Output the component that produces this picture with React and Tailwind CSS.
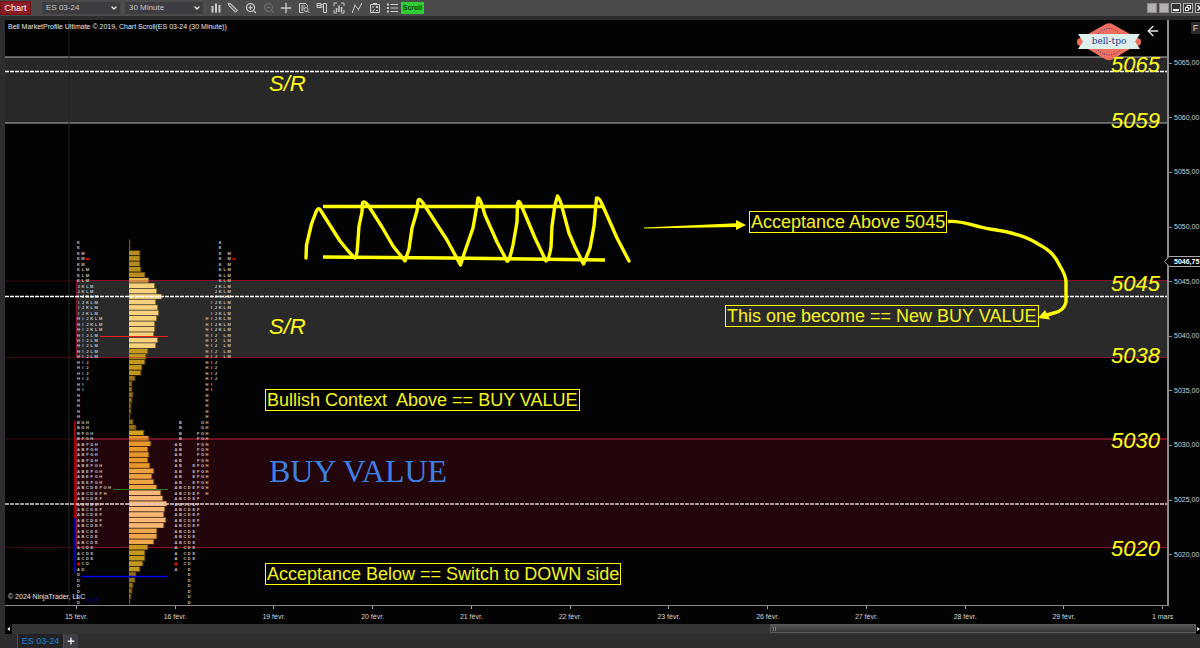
import {
  ArrowLeft,
  ChevronDown,
  ClipboardList,
  FileSearch,
  List,
  Plus,
  ZoomIn,
  ZoomOut,
} from 'lucide-react';

// One entry per half point: letters printed, volume bar width
const profile = [
  ['K', 1], ['K', 1], ['KM', 11], ['KM', 11], ['KM', 11], ['KLM', 12], ['KLM', 16],
  ['KLM', 20], ['JKLM', 26], ['JKLM', 28], ['IJKLM', 33], ['IJKLM', 27], ['IJKLM', 29],
  ['IJKLM', 30], ['HIJKLM', 28], ['HIJKLM', 26], ['HIJKLM', 26], ['HIJLM', 25], ['HIJLM', 29],
  ['HIJLM', 27], ['HIJLM', 19], ['HIJLM', 17], ['HIJ', 16], ['HIJ', 13], ['HIJ', 12],
  ['HIJ', 6], ['HI', 3], ['HI', 3], ['H', 4], ['H', 3], ['H', 2], ['H', 2], ['H', 1],
  ['BGH', 4], ['BGH', 7], ['BFGH', 15], ['BFGH', 20], ['ABFGH', 22], ['ABFGH', 19],
  ['ABFGH', 20], ['ABFGH', 19], ['ABEFGH', 21], ['ABEFGH', 25], ['ABEFGH', 23],
  ['ABEFGH', 25], ['ABCDEFGH', 28], ['ABCDEFH', 32], ['ABCDEF', 34], ['ABCDEF', 38],
  ['ABCDEF', 36], ['ABCDEF', 35], ['ABCDEF', 37], ['ABCDEF', 35], ['ABCDE', 28],
  ['ABCDE', 28], ['ABCDE', 25], ['ACDE', 19], ['ACDE', 16], ['ACDE', 16], ['ACD', 14],
  ['AD', 11], ['D', 7], ['D', 6], ['D', 4], ['D', 3], ['D', 2], ['D', 1],
];

const ROW = 5.45;
const TOP = 242.4;

const barColor = (i) => {
  if (i < 7) return '#b98c1e';
  if (i === 7) return '#e3b24f';
  if (i < 20) return '#f8d17c';
  if (i < 25) return '#c4981f';
  if (i < 35) return '#92701a';
  if (i === 35) return '#d4a11f';
  if (i < 42) return '#e8982a';
  if (i < 46) return '#eda341';
  if (i < 53) return '#fab877';
  if (i < 56) return '#eda84c';
  if (i < 61) return '#c4981f';
  return '#92701a';
};

const prices = ['5065,00', '5060,00', '5055,00', '5050,00', '5045,00', '5040,00', '5035,00', '5030,00', '5025,00', '5020,00'];
const days = ['15 févr.', '16 févr.', '19 févr.', '20 févr.', '21 févr.', '22 févr.', '23 févr.', '26 févr.', '27 févr.', '28 févr.', '29 févr.', '1 mars'];

const levels = [
  { text: '5065', top: 'top-[34px]' },
  { text: '5059', top: 'top-[90px]' },
  { text: '5045', top: 'top-[253px]' },
  { text: '5038', top: 'top-[325px]' },
  { text: '5030', top: 'top-[410px]' },
  { text: '5020', top: 'top-[518px]' },
];

const notes = [
  { text: 'Acceptance Above 5045', place: 'left-[744px] top-[191px]' },
  { text: 'This one become == New BUY VALUE', place: 'left-[720px] top-[285px]' },
  { text: 'Bullish Context  Above == BUY VALUE', place: 'left-[260px] top-[369px]' },
  { text: 'Acceptance Below == Switch to DOWN side', place: 'left-[260px] top-[543px]' },
];

function PickList({ label, value }) {
  return (
    <div className="relative w-[78px] h-3 bg-[#3d3d41]">
      <select
        aria-label={label}
        defaultValue={value}
        className="block w-full h-full appearance-none bg-transparent pl-1 text-[8px] leading-3 text-[#c4c4c4] outline-none"
      >
        <option>{value}</option>
      </select>
      <ChevronDown className="absolute right-0.5 top-0.5 size-2 text-gray-200 pointer-events-none" strokeWidth={4} />
    </div>
  );
}

function ToolIcon({ children }) {
  return (
    <svg viewBox="0 0 12 12" className="size-3" fill="none" stroke="currentColor" strokeWidth="1">
      {children}
    </svg>
  );
}

const tools = [
  {
    name: 'Chart style',
    icon: <ToolIcon><path d="M2.500 4v6.500M6 1.500v9M9.500 3v7.500" strokeWidth="2" /></ToolIcon>,
  },
  {
    name: 'Draw',
    icon: (
      <ToolIcon>
        <path d="M1 1l3 .8 6.500 6.500-2 2L2 3.800z" fill="currentColor" fillOpacity=".55" />
        <path d="M3 3l6 6" stroke="#4b4b4b" strokeWidth=".6" />
      </ToolIcon>
    ),
  },
  { name: 'Zoom in', icon: <ZoomIn className="size-3" strokeWidth={2.5} /> },
  { name: 'Zoom out', icon: <ZoomOut className="size-3 text-[#737373]" /> },
  { name: 'Cursor', icon: <Plus className="size-4" strokeWidth={2} /> },
  {
    name: 'Data box',
    icon: <ToolIcon><path d="M9.500 5V3.500L7.500 1.500h-6v9h4M3 4h4M3 6h3M3 8h2" /><circle cx="8" cy="7.500" r="2" /><path d="M9.500 9l2 2" /></ToolIcon>,
  },
  {
    name: 'Chart trader',
    icon: <ToolIcon><path d="M1 1.500h4v4H1zM1 3.500h4M7.500 1.500h3v9h-3zM5 2.500h2.500M5 5h2.500" /></ToolIcon>,
  },
  {
    name: 'Data series',
    icon: <ToolIcon><path d="M1 4V1h3M8 1h3v3M11 8v3H8M4 11H1V8" /><path d="M3.500 6v4M6 3.500V10M8.500 5v5" strokeWidth="1.500" /></ToolIcon>,
  },
  {
    name: 'Indicators',
    icon: <ToolIcon><path d="M1.500 10L4 3.500l3.500 4L10.500 2" /><path d="M1 10h1M3.500 3.500h1M7 7.500h1M10 2h1" strokeWidth="2" /></ToolIcon>,
  },
  {
    name: 'Strategies',
    icon: <ToolIcon><path d="M1.500 2.500h9v8h-9zM4 1.500h4M3 5h2M7 4l2 2M9 4L7 6M3 8.500l1 1 1.500-2M7 8.500h2" /></ToolIcon>,
  },
  {
    name: 'Properties',
    icon: <ToolIcon><path d="M4.500 2.500H12M4.500 6H12M4.500 9.500H12" /><path d="M1 2.500h2M1 6h2M1 9.500h2" strokeWidth="2" /></ToolIcon>,
  },
];

function Toolbar() {
  return (
    <header className="flex items-center h-4 shrink-0 overflow-hidden bg-[#4b4b4b] text-[#c9c9c9]">
      <button className="w-[31px] h-[14px] bg-[#8e1a23] border border-[#6d1119] text-[9px] leading-3 text-white">
        Chart
      </button>
      <div className="flex gap-[5px] ml-[11px]">
        <PickList label="Instrument" value="ES 03-24" />
        <PickList label="Interval" value="30 Minute" />
      </div>
      <div className="grid grid-cols-11 w-[194px] ml-1 h-4">
        {tools.map((tool) => (
          <button key={tool.name} aria-label={tool.name} className="flex items-center justify-center">
            {tool.icon}
          </button>
        ))}
      </div>
      <button className="w-[23px] h-3 bg-[#2fce35] text-[7px] leading-3 font-bold text-[#0b3a0d]">Scroll</button>
      <div className="flex gap-0.5 ml-auto -mr-[5px] shrink-0">
        <span className="size-[10px] bg-[#b4b0b0] border border-[#8d8a8a]" />
        <span className="size-[10px] bg-[#b4b0b0] border border-[#8d8a8a]" />
        <button aria-label="Minimize" className="flex items-end justify-center size-[10px] border border-[#b0b0b0] bg-[#333] pb-px">
          <span className="w-1.5 h-0.5 bg-white" />
        </button>
        <button aria-label="Restore" className="size-[10px] border border-[#b0b0b0] bg-[#333]">
          <svg viewBox="0 0 8 8" className="size-2" fill="none" stroke="#fff">
            <path d="M3 3V1.500h3.500V5H5M1.500 3.500h3v3h-3z" />
          </svg>
        </button>
        <button aria-label="Close" className="size-[10px] border border-[#b0b0b0] bg-[#333]">
          <svg viewBox="0 0 8 8" className="size-2" stroke="#fff" strokeWidth="1.500">
            <path d="M1.500 1.500l5 5M6.500 1.500l-5 5" />
          </svg>
        </button>
      </div>
    </header>
  );
}

function Letters({ x, collapsed }) {
  return profile.map(([letters], i) =>
    letters.split('').map((letter, n) => {
      const col = collapsed ? n : letter.charCodeAt(0) - 65;
      const stop = letter === 'A' && i === 59;
      const cx = x + col * 4.43;
      const cy = TOP + i * ROW;
      return stop ? (
        <circle key={letter + i} cx={cx} cy={cy} r="1.7" fill="#e00808" />
      ) : (
        <text key={letter + i} x={cx} y={cy + 1.5}>{letter}</text>
      );
    })
  );
}

function Drawing() {
  return (
    <svg className="absolute inset-0 w-full h-full" fill="none">
      <g transform="translate(-5 -20)">
        {/* Zones */}
        <rect x="5" y="57" width="100%" height="66" fill="#282828" />
        <path d="M5 57h4000M5 123h4000" stroke="#b5b5b5" />
        <rect x="76" y="281" width="100%" height="76" fill="#2a2a2a" />
        <path d="M76.500 357.500V280.500H4000M76.500 357.500H4000" stroke="#8c1029" />
        <rect x="76" y="439" width="100%" height="109" fill="#22060c" />
        <path d="M76.500 439V547.500H4000" stroke="#8c1029" />
        <path d="M5 281h71M5 357.500h71M5 439h71M5 547.500h71" stroke="#3c0913" />
        <path d="M76 439H4000" stroke="#6e1222" strokeWidth="2" />
        <path d="M69 20v586" stroke="#242424" />

        {/* Volume profile */}
        {profile.map(([, width], i) => (
          <g key={i}>
            <rect x="129" y={TOP + i * ROW - 2.7} width={width} height="4.7" fill={barColor(i)} />
            <rect x={128.3 + width} y={TOP + i * ROW - 2.7} width="1" height="5.2" fill="#5e4712" />
          </g>
        ))}
        <path d="M129 281h20M129 357.500h18M129 439h20" stroke="#b03a26" strokeOpacity=".7" />

        {/* TPO letters */}
        <g fill="#c4c4c4" fontSize="4" fontWeight="bold" textAnchor="middle" fontFamily="Liberation Sans, sans-serif">
          <Letters x={78.5} collapsed />
          <Letters x={176} />
        </g>
        <path d="M86 259h3M232.500 259h3" stroke="#d00" strokeWidth="2" />

        <path d="M5 71.500h4000M5 296.500h4000" stroke="#fff" strokeWidth="1.500" strokeDasharray="4 1" />
        <path d="M5 504h4000" stroke="#ddd0d0" strokeWidth="1.500" strokeDasharray="4 1" />
        <path d="M100 336.500h68" stroke="#f01c1c" />
        <path d="M113 489.500h55" stroke="#2d7a1a" />
        <path d="M82 576.500h86" stroke="#0000f0" strokeWidth="1.500" />
        <path d="M75 421v97" stroke="#e00000" strokeWidth="1.500" />
        <path d="M75 518v55" stroke="#0000e0" strokeWidth="1.500" />

        {/* Freehand notes */}
        <g stroke="#ffff00" strokeWidth="3.400" strokeLinecap="round" strokeLinejoin="round">
          <path d="M306 258L306.500 245L311.500 224L316 212Q318.500 206 321 211L326 219L340 241L349 252L355 258Q357 256 357.500 247L359 226L362 212L362.500 203Q364 200 368 205L382 227L393 246L405 261L409 249L412 228L417 211L418 201Q419 197 423 203L447 240L460.500 265L464 254L473 228L477 205L478 198Q480 197 485 215L497 242L507 261Q509 263 513 245L517 222L517.500 204Q518.500 198 522 207L535 238L546 261Q549 260 551 247L552 226L555 205L557.500 196Q560 199 562 207L569 233L575 247L583.500 264L590 248L594 226L596.500 198Q599 197 602 204L617 238L629 261" />
          <path d="M323 206.500H602M323 257L448 258L605 260" strokeLinecap="butt" />
          <path d="M948 221.500C962 220 972 226 990 229C1012 232 1026 236 1038 244C1052 251 1056 258 1060 266Q1066 276 1066 282V302Q1064 311 1054 313L1047 315" strokeLinecap="butt" />
        </g>
        <path d="M644 227.500L736 223.300V220L746 225L736 230V227L644 228.500z" fill="#ffff00" />
        <path d="M1038 318L1045 310L1050 319.500z" fill="#ffff00" />
      </g>
    </svg>
  );
}

function Logo() {
  return (
    <div className="absolute right-1.5 top-[3px] flex items-start gap-1 text-gray-200">
      <div className="relative w-16 h-[38px]">
        <svg viewBox="0 0 64 38" className="w-16 h-[38px]">
          <path d="M28 1.500Q32-1 36 1.500L53 11V26L36 36Q32 38.500 28 36L11 26V11z" fill="#ef6f5f" />
          <circle cx="4" cy="19" r="4" fill="#ef6f5f" />
          <circle cx="60" cy="19" r="4" fill="#ef6f5f" />
          <path d="M21 11Q32 0 43 11M21 27Q32 37 43 27" fill="none" stroke="#34347e" strokeWidth="1" strokeDasharray="1 1.400" />
          <path d="M1 11H63L58 18.500L63 26H1L6 18.500z" fill="#dcefea" />
        </svg>
        <span className="absolute inset-x-0 top-[12px] text-center font-['DejaVu_Serif',serif] text-[9px] leading-3 text-[#2d3a8c]">
          bell-tpo
        </span>
      </div>
      <button aria-label="Back">
        <ArrowLeft className="size-4" strokeWidth={2} />
      </button>
    </div>
  );
}

function Plot() {
  return (
    <main className="relative flex-1 overflow-hidden border-r-2 border-b border-[#8a8a8a] bg-[#030303]">
      <Drawing />
      <p className="absolute left-[3px] top-[3px] text-[7px] leading-2 text-gray-200">
        Bell MarketProfile Ultimate © 2019, Chart Scroll(ES 03-24 (30 Minute))
      </p>
      <Logo />
      <div className="text-[22px] leading-none italic text-[#ffff1a]">
        {levels.map((level) => (
          <span key={level.text} className={`absolute right-[7px] ${level.top}`}>{level.text}</span>
        ))}
        <span className="absolute left-[264px] top-[53px]">S/R</span>
        <span className="absolute left-[264px] top-[296px]">S/R</span>
      </div>
      {notes.map((note) => (
        <p
          key={note.text}
          className={`absolute border border-[#ffff00] px-px text-[18px] leading-5 whitespace-pre text-[#f4f41c] ${note.place}`}
        >
          {note.text}
        </p>
      ))}
      <h1 className="absolute left-[264px] top-[433px] font-['Liberation_Serif',serif] text-[32px] leading-9 whitespace-nowrap text-[#3f80e6]">
        BUY VALUE
      </h1>
      <p className="absolute left-[3px] bottom-1 text-[7px] leading-2 text-gray-200">© 2024 NinjaTrader, LLC</p>
      <span className="absolute left-[81px] bottom-px text-[5px] leading-2 text-[#00008c]">02/15</span>
    </main>
  );
}

function PriceAxis() {
  return (
    <aside className="relative flex flex-col w-[31px] shrink-0 pt-4 pb-6 text-[7px] leading-2 text-[#cfcfcf]">
      {prices.map((price) => (
        <div key={price} className="flex flex-1 items-center gap-0.5">
          <span className="w-[3px] h-px shrink-0 bg-[#8a8a8a]" />
          {price}
        </div>
      ))}
      <button className="absolute right-0 top-0.5 w-[9px] h-3 bg-[#2b2b2d] text-[9px] leading-3 text-gray-300">F</button>
      <div className="absolute -left-[5px] right-0 top-[236px] h-[11px]">
        <svg viewBox="0 0 36 11" className="absolute inset-0 w-full h-full">
          <path d="M38 .500H5L.500 5.500L5 10.500H38" fill="#030303" stroke="#a8a8a8" />
        </svg>
        <span className="absolute left-[10px] top-0.5 font-bold text-white">5046,75</span>
      </div>
    </aside>
  );
}

export default function App() {
  return (
    <div className="flex flex-col h-screen overflow-hidden bg-[#2d2d30] font-['Liberation_Sans',Arial,sans-serif]">
      <Toolbar />
      <div className="flex flex-col flex-1 min-h-0 mt-1 ml-[5px] overflow-hidden bg-[#030303]">
        <div className="flex flex-1 min-h-0">
          <Plot />
          <PriceAxis />
        </div>
        <div className="grid grid-cols-12 h-[18px] ml-[22px] -mr-[12px] shrink-0 text-[7px] leading-2 text-[#d5d5d5]">
          {days.map((day) => (
            <div key={day} className="flex flex-col items-center gap-1">
              <span className="w-px h-[3px] shrink-0 bg-[#a0a0a0]" />
              {day}
            </div>
          ))}
        </div>
      </div>
      <div className="flex h-[10px] shrink-0 ml-[5px] bg-[#343434]">
        <button aria-label="Scroll left" className="flex items-center justify-center w-[7px] bg-black">
          <svg viewBox="0 0 4 6" className="w-[3px] h-1"><path d="M4 0v6L0 3z" fill="#fff" /></svg>
        </button>
        <div className="flex flex-1 justify-end">
          <div className="flex items-center gap-px w-[36%] h-[9px] pl-0.5 border border-[#5a5a5a] bg-linear-to-b from-[#565656] to-[#363636]">
            <span className="w-px h-1 bg-[#777]" />
            <span className="w-px h-1 bg-[#777]" />
          </div>
        </div>
        <button aria-label="Scroll right" className="flex items-center justify-center w-1 bg-black">
          <svg viewBox="0 0 4 6" className="w-[3px] h-1"><path d="M0 0v6l4-3z" fill="#fff" /></svg>
        </button>
      </div>
      <footer className="flex h-[14px] shrink-0 pl-[17px]">
        <button className="w-[47px] border-x border-[#1a5f91] bg-[#232326] text-[9px] leading-3 text-[#1683d0] whitespace-nowrap">
          ES 03-24
        </button>
        <button aria-label="Add tab" className="flex items-center justify-center w-[14px] bg-[#3f3f46] text-white">
          <Plus className="size-2.5" strokeWidth={3} />
        </button>
      </footer>
    </div>
  );
}
